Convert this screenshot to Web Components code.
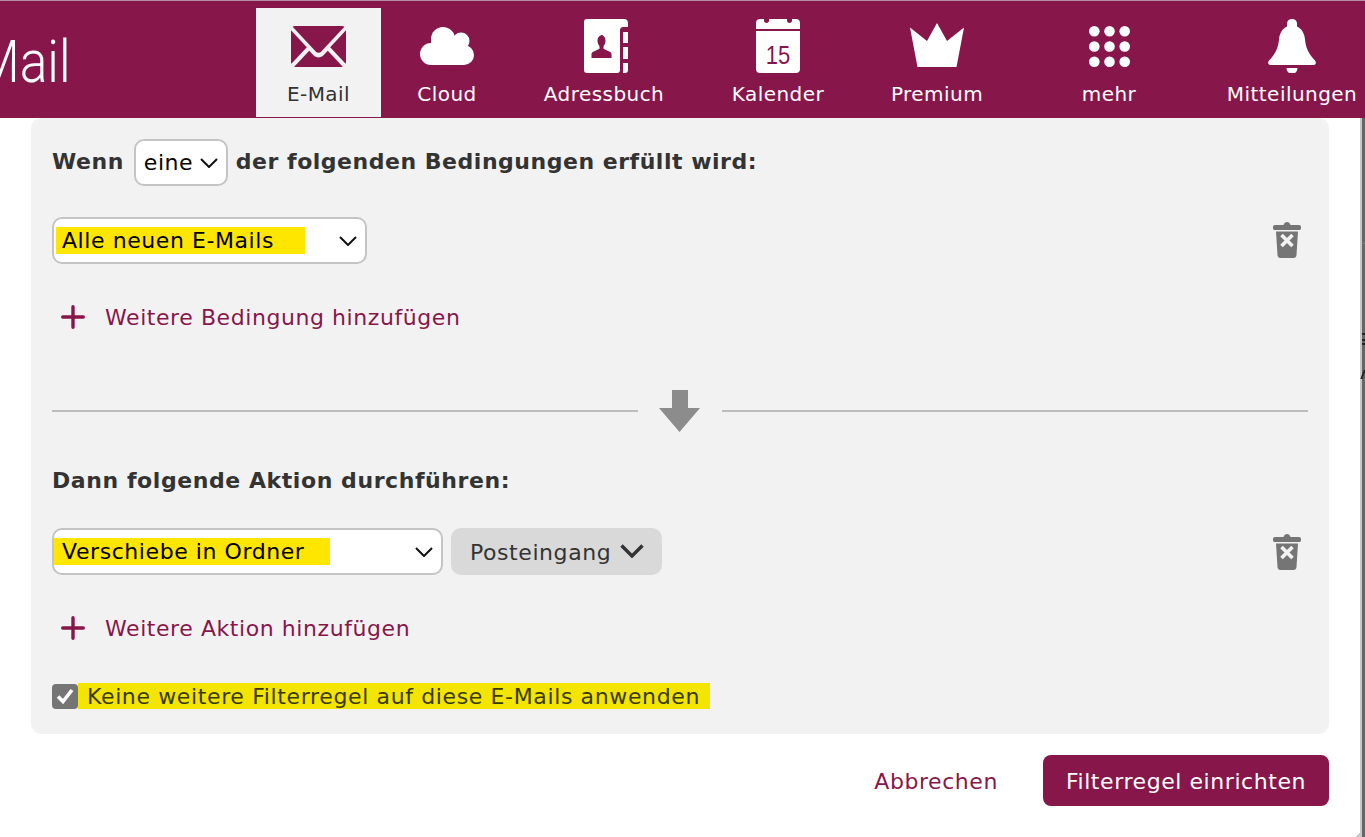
<!DOCTYPE html>
<html lang="de">
<head>
<meta charset="utf-8">
<title>E-Mail Filterregel</title>
<style>
  html, body { margin: 0; height: 100%; background: #fff; overflow: hidden; }
  body { font-family: "DejaVu Sans", Verdana, sans-serif; }
</style>
</head>
<body>
<mail-dialog>
  <mail-header slot="header">
    <nav-item label="E-Mail" active style="--w:125px"><svg viewBox="0 0 55 41" width="55" height="41"><path fill="#87174a" d="M4 0h47c1 0 1.800.2 2.400.7L30.300 25.500c-1.500 1.600-4.100 1.600-5.600 0L1.600.7C2.200.2 3 0 4 0z"/><path fill="#87174a" d="M0 4.200l15.800 17L.4 37.800C.1 37.200 0 36.500 0 36V4.200zM55 4.200V36c0 .5-.1 1.200-.4 1.800L39.200 21.200zM3.200 40.800l15-16.100 4.300 4.600c2.700 2.800 7.300 2.800 10 0l4.300-4.600 15 16.100c-.5.100-1 .2-1.800.2H5c-.8 0-1.300-.1-1.800-.2z"/></svg></nav-item>
    <nav-item label="Cloud" style="--w:132px"><svg viewBox="0 0 54 38" width="54" height="38" fill="#fff"><circle cx="23" cy="12" r="12"/><circle cx="41" cy="14" r="8.500"/><circle cx="11" cy="27" r="11"/><circle cx="44" cy="28" r="10"/><path d="M11 14h33v24H11z"/></svg></nav-item>
    <nav-item label="Adressbuch" style="--w:182px"><svg style="margin-left:4px" viewBox="0 0 44 54" width="44" height="54"><path fill="#fff" fill-rule="evenodd" d="M3 0h37c2.500 0 4 1.500 4 4v4h-5c-2 0-3 1.500-3 3v40c0 2-1 3-3 3H3c-2 0-3-1-3-3V3c0-2 1-3 3-3zm15.500 16c-3 0-5 2.600-5 5.800 0 2.200.8 4.200 2 5.400v2.600l-5.700 2.600c-1.400.6-2.300 1.300-2.300 2.900V39h20v-3.700c0-1.600-.9-2.300-2.300-2.900l-5.700-2.600v-2.600c1.200-1.200 2-3.200 2-5.400 0-3.200-2-5.800-4-5.800z"/><path fill="#fff" d="M39 13h5v11h-5zM39 28h5v12h-5zM39 44h5v7c0 2-1 3-3 3h-2z"/></svg></nav-item>
    <nav-item label="Kalender" style="--w:166px"><calendar-icon></calendar-icon></nav-item>
    <nav-item label="Premium" style="--w:152px"><svg style="margin-top:-2px" viewBox="0 0 54 44" width="54" height="44"><path fill="#fff" d="M0 4.500L17 18 27 0l10 18L54 4.500 46.500 44h-39z"/></svg></nav-item>
    <nav-item label="mehr" style="--w:192px"><svg viewBox="0 0 41 41" width="41" height="41" fill="#fff"><circle cx="5.300" cy="5.300" r="5.300"/><circle cx="20.500" cy="5.300" r="5.300"/><circle cx="35.700" cy="5.300" r="5.300"/><circle cx="5.300" cy="20.500" r="5.300"/><circle cx="20.500" cy="20.500" r="5.300"/><circle cx="35.700" cy="20.500" r="5.300"/><circle cx="5.300" cy="35.700" r="5.300"/><circle cx="20.500" cy="35.700" r="5.300"/><circle cx="35.700" cy="35.700" r="5.300"/></svg></nav-item>
    <nav-item label="Mitteilungen" style="--w:174px"><svg viewBox="0 0 48 54" width="48" height="54" fill="#fff"><path d="M24 0c3 0 5 2 5 4.500v3c5 2.400 7.500 7 8 13 .7 8 3.500 14.500 10 21 1.600 2 1 4.500-1.500 4.500h-43C0 46-.6 43.500 1 41.500c6.500-6.500 9.300-13 10-21 .5-6 3-10.600 8-13v-3C19 2 21 0 24 0z"/><path d="M18.500 49h11c0 2-1.500 5-3 5h-5c-1.500 0-3-3-3-5z"/></svg></nav-item>
  </mail-header>

  <filter-panel>
    <panel-heading style="--heading-lh:45px;letter-spacing:.52px">Wenn <select-box value="eine" style="--w:94px;margin:0 -1px 0 1px;letter-spacing:.57px"></select-box> der folgenden Bedingungen erfüllt wird:</panel-heading>
    <rule-row style="--row-top:31px;--trash-top:5px">
      <select-box value="Alle neuen E-Mails" mark="249px" style="--w:315px"></select-box>
    </rule-row>
    <add-link style="--link-top:34px">Weitere Bedingung hinzufügen</add-link>
    <arrow-divider></arrow-divider>
    <panel-heading style="--heading-top:23px">Dann folgende Aktion durchführen:</panel-heading>
    <rule-row style="--row-top:24px">
      <select-box value="Verschiebe in Ordner" mark="276px" style="--w:391px;--lead:0px;--inset:8px"></select-box>
      <folder-button>Posteingang</folder-button>
    </rule-row>
    <add-link style="--link-top:34px">Weitere Aktion hinzufügen</add-link>
    <check-row>Keine weitere Filterregel auf diese E-Mails anwenden</check-row>
  </filter-panel>

  <dialog-footer></dialog-footer>
</mail-dialog>

<script>
/*
 * Small helper, every element below gets its markup from a string.
 */
function defineElement (name, markup, setup) {
  const template = document.createElement('template')
  template.innerHTML = markup
  customElements.define(name, class extends HTMLElement {
    constructor () {
      super()
      this.attachShadow({ mode: 'open' })
        .appendChild(template.content.cloneNode(true))
    }

    connectedCallback () {
      if (setup) setup(this, this.shadowRoot)
    }
  })
}

const CHEVRON = `<svg viewBox="0 0 18 10" width="18" height="10" fill="none" stroke="currentColor" stroke-width="2"><path d="M1 1l8 8 8-8"/></svg>`

defineElement('mail-dialog', `
  <style>
    :host { display: flex; flex-direction: column; position: relative; width: 1365px; height: 837px; box-sizing: border-box; background: #fff; overflow: hidden; letter-spacing: .57px; }
    .edge { position: absolute; top: 118px; right: 0; bottom: 0; width: 5px; background: #666; border-left: 2px solid #c8c8c8; box-sizing: border-box; }
    .edge i { position: absolute; left: 0; right: 0; height: 2px; background: #222; }
    .edge i.faint { top: 125px; height: 1px; background: #7c7c7c; }
    .edge i.slant { top: 252px; left: 0; right: auto; width: 2px; height: 9px; transform: skewX(-20deg); }
    .corner { position: absolute; right: 5px; bottom: 0; width: 4px; height: 4px; background: linear-gradient(135deg, transparent 50%, #c8c8c8 50%); }
  </style>
  <slot name="header"></slot>
  <slot></slot>
  <div class="edge"><i class="faint"></i><i style="top:215px"></i><i style="top:221px"></i><i style="top:225px"></i><i class="slant"></i></div>
  <div class="corner"></div>
`)

defineElement('mail-header', `
  <style>
    :host { display: flex; flex: none; width: 1365px; height: 118px; box-sizing: border-box; border-top: 1px solid #b48ba0; background: #87174a; color: #fff; overflow: hidden; }
    .brand { flex: none; width: 256px; height: 117px; overflow: hidden; position: relative; }
    .brand span { position: absolute; left: -25px; top: 26px; font: 300 60px/70px Roboto, sans-serif; letter-spacing: 0; transform: scaleX(.86); transform-origin: left center; }
    nav { display: flex; flex: none; padding-top: 7px; }
  </style>
  <div class="brand"><span>Mail</span></div>
  <nav><slot></slot></nav>
`)

defineElement('nav-item', `
  <style>
    :host { display: flex; flex-direction: column; align-items: center; flex: none; width: var(--w); height: 109px; color: #fff; font-family: "DejaVu Sans", Verdana, sans-serif; font-size: 20px; letter-spacing: .45px; }
    :host([active]) { background: #f2f2f2; color: #333; }
    .icon { display: flex; align-items: center; justify-content: center; height: 58px; margin-top: 9px; }
    .label { margin-top: 5px; line-height: 28px; white-space: nowrap; }
  </style>
  <div class="icon"><slot></slot></div>
  <div class="label"></div>
`, (el, root) => {
  root.querySelector('.label').textContent = el.getAttribute('label')
})

defineElement('calendar-icon', `
  <style>
    :host { display: block; position: relative; width: 44px; height: 54px; }
    svg { display: block; }
    span { position: absolute; left: 0; right: 0; top: 22px; text-align: center; color: #87174a; font: 25px/28px "Liberation Sans", Arial, sans-serif; letter-spacing: 0; transform: scaleX(.88); }
  </style>
  <svg viewBox="0 0 44 54" width="44" height="54" fill="#fff"><path d="M4 0h4v1.500C8 3 9 4 10.500 4S13 3 13 1.500V0h18v1.500C31 3 32 4 33.500 4S36 3 36 1.500V0h4c2.500 0 4 1.500 4 4v6H0V4c0-2.500 1.500-4 4-4z"/><path d="M0 12h44v38c0 2.500-1.500 4-4 4H4c-2.500 0-4-1.500-4-4z"/></svg>
  <span>15</span>
`)

defineElement('filter-panel', `
  <style>
    :host { display: block; flex: none; box-sizing: border-box; width: 1298px; height: 616px; margin-left: 31px; padding: 21px 21px 0; background: #f2f2f2; border-radius: 10px; color: #333; font-size: 22px; }
  </style>
  <slot></slot>
`)

defineElement('panel-heading', `
  <style>
    :host { display: flex; align-items: flex-start; gap: 9px; height: 47px; margin-top: var(--heading-top, 0); font-weight: 700; font-size: 22px; line-height: var(--heading-lh, 47px); color: #333; white-space: nowrap; }
  </style>
  <slot></slot>
`)

defineElement('select-box', `
  <style>
    :host { display: inline-flex; align-items: center; justify-content: space-between; flex: none; box-sizing: border-box; width: var(--w); height: 47px; padding: 0 8px 0 var(--lead, 2px); background: #fff; border: 2px solid #c4c4c4; border-radius: 10px; color: #000; font-weight: 400; font-size: 22px; }
    .value { display: block; box-sizing: border-box; height: 27px; padding-left: var(--inset, 6px); line-height: 27px; white-space: nowrap; }
    .value.mark { background: #ffe600; }
    svg { display: block; flex: none; color: #111; }
  </style>
  <span class="value"></span>
  ${CHEVRON}
`, (el, root) => {
  const value = root.querySelector('.value')
  value.textContent = el.getAttribute('value')
  if (el.hasAttribute('mark')) {
    value.classList.add('mark')
    value.style.width = el.getAttribute('mark')
  }
})

defineElement('trash-icon', `
  <style>
    :host { display: block; width: 28px; height: 36px; }
    svg { display: block; }
  </style>
  <svg viewBox="0 0 28 36" width="28" height="36"><path fill="#757575" d="M10.500 3C11 1 12.500 0 14 0s3 1 3.500 3H26c1.200 0 2 .8 2 2v1.500c0 .8-.8 1.500-1.600 1.500H1.600C.8 8 0 7.300 0 6.500V5c0-1.200.8-2 2-2zM3 9.500h22L23.500 33c-.1 1.800-1.300 3-3 3h-13c-1.700 0-2.900-1.200-3-3z"/><path fill="none" stroke="#f2f2f2" stroke-width="3.600" d="M8.500 13l11 11M19.500 13l-11 11"/></svg>
`)

defineElement('rule-row', `
  <style>
    :host { display: flex; align-items: center; gap: 8px; position: relative; height: 47px; margin-top: var(--row-top, 0); }
    trash-icon { position: absolute; right: 7px; top: var(--trash-top, 6px); }
  </style>
  <slot></slot>
  <trash-icon></trash-icon>
`)

defineElement('folder-button', `
  <style>
    :host { display: inline-flex; align-items: center; flex: none; box-sizing: border-box; width: 211px; height: 47px; padding: 2px 0 0 19px; gap: 9px; background: #d9d9d9; border-radius: 10px; color: #333; font-size: 22px; }
    svg { display: block; width: 24px; height: 14px; margin-top: -3px; }
  </style>
  <slot></slot>
  <svg viewBox="0 0 24 14" fill="none" stroke="#333" stroke-width="3.400"><path d="M1.500 1.500L12 12 22.500 1.500"/></svg>
`)

defineElement('add-link', `
  <style>
    :host { display: flex; align-items: center; gap: 20px; height: 38px; margin-top: var(--link-top, 0); padding-left: 9px; color: #87174a; font-size: 22px; }
    svg { display: block; flex: none; }
  </style>
  <svg viewBox="0 0 24 24" width="24" height="24" stroke="#87174a" stroke-width="3.400" stroke-linecap="round"><path d="M12 1.700v20.600M1.700 12h20.600"/></svg>
  <slot></slot>
`)

defineElement('arrow-divider', `
  <style>
    :host { display: flex; align-items: center; height: 46px; margin-top: 52px; gap: 21px; }
    i { display: block; flex: 1; height: 2px; background: #bdbdbd; }
    svg { display: block; flex: none; }
  </style>
  <i></i>
  <svg viewBox="0 0 42 42" width="42" height="42"><path fill="#8c8c8c" d="M13 0h16v18h12L20.500 42 0 18h13z"/></svg>
  <i></i>
`)

defineElement('check-row', `
  <style>
    :host { display: flex; align-items: center; height: 26px; margin-top: 36px; color: #333; font-size: 22px; letter-spacing: .63px; }
    .box { display: flex; align-items: center; justify-content: center; flex: none; box-sizing: border-box; width: 26px; height: 25px; background: #757575; border-radius: 4px; }
    .text { display: block; height: 26px; padding: 0 10px 0 9px; background: #f4e500; line-height: 28px; white-space: nowrap; color: #3a3a00; }
  </style>
  <span class="box"><svg viewBox="0 0 18 16" width="18" height="16" fill="none" stroke="#fff" stroke-width="3.600"><path d="M2 8.500l5 5L16 2"/></svg></span>
  <span class="text"><slot></slot></span>
`)

defineElement('dialog-footer', `
  <style>
    :host { display: flex; align-items: center; justify-content: flex-end; gap: 45px; flex: none; box-sizing: border-box; width: 1329px; height: 51px; margin-top: 21px; color: #87174a; font-size: 22px; }
    span { padding-top: 2px; }
    button { box-sizing: border-box; width: 286px; height: 51px; padding: 2px 0 0; border: 0; border-radius: 8px; background: #87174a; color: #fff; font: inherit; letter-spacing: inherit; }
  </style>
  <span>Abbrechen</span>
  <button type="button">Filterregel einrichten</button>
`)
</script>
</body>
</html>
